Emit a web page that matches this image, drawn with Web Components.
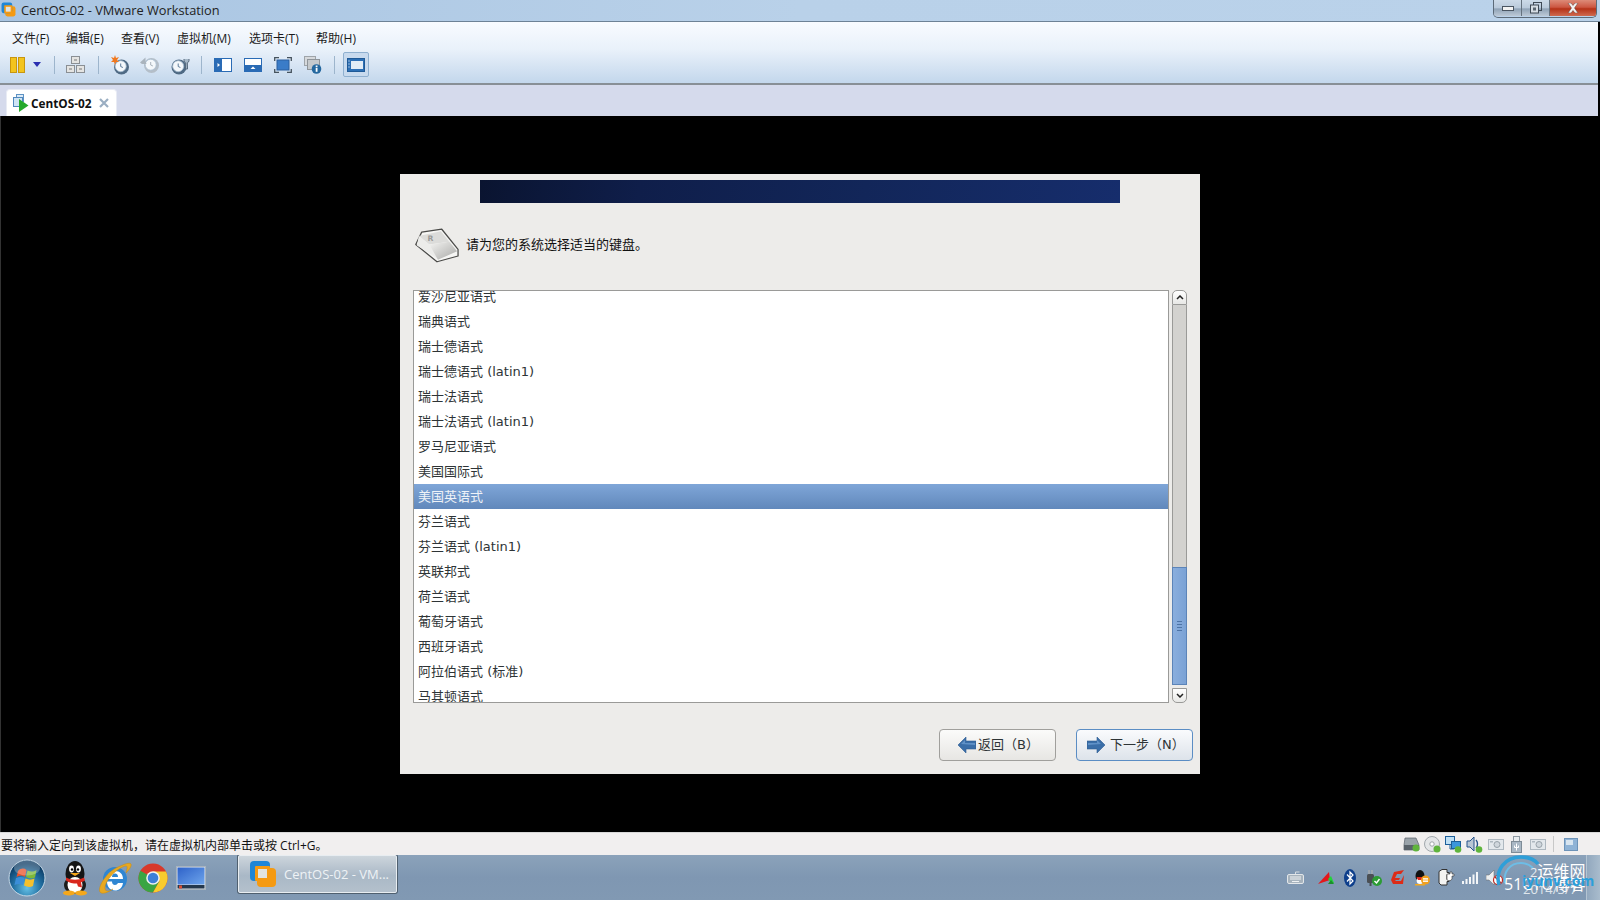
<!DOCTYPE html>
<html lang="zh"><head><meta charset="utf-8"><title>CentOS-02 - VMware Workstation</title>
<style>
html,body{margin:0;padding:0;width:1600px;height:900px;overflow:hidden;background:#000}
body{font-family:"Open Sans","Noto Sans CJK SC",sans-serif}
</style></head><body>
<vm-app></vm-app>
<script>
const CJK='"Noto Sans CJK SC"';
function def(name,css,html,init){
  customElements.define(name,class extends HTMLElement{
    constructor(){super();const r=this.attachShadow({mode:'open'});
      r.innerHTML='<style>'+css+'</style>'+(typeof html==='function'?html(this):html);}
    connectedCallback(){if(init)init(this)}
  });
}
/* ---------- icons ---------- */
const clock=(cx,cy,r,rim,hand)=>`<circle cx="${cx}" cy="${cy}" r="${r}" fill="${rim}"/><circle cx="${cx-.8}" cy="${cy-.8}" r="${r-2}" fill="#f4f8fb" stroke="#a9bfd2" stroke-width=".8"/><path d="M${cx-.8} ${cy-3.500}v3l2.200 1" fill="none" stroke="${hand}" stroke-width=".9"/>`;
const I={
 pause:'<svg width="15" height="16" viewBox="0 0 15 16"><rect x=".5" y=".5" width="6" height="15" fill="#f3c41e" stroke="#c8960e"/><rect x="8.5" y=".5" width="6" height="15" fill="#f3c41e" stroke="#c8960e"/></svg>',
 drop:'<svg width="8" height="5" viewBox="0 0 8 5"><path d="M0 0h8L4 5z" fill="#2a2fb0"/></svg>',
 net:'<svg width="19" height="17" viewBox="0 0 19 17"><g fill="#e4e4e2" stroke="#8a8f94"><rect x="5.500" y=".5" width="8" height="7"/><rect x=".5" y="9.500" width="8" height="7"/><rect x="10.500" y="9.500" width="8" height="7"/></g><path d="M8 4h3M3 13h3M13 13h3" stroke="#777"/></svg>',
 snap:`<svg width="20" height="20" viewBox="0 0 20 20">${clock(11.500,12,7.500,'#4f6a84','#4b6c8c')}<path d="M5 0l1 3 3-1-2 3 2 2-3 0-1 3-1-3-3 0 2-2-2-3 3 1z" fill="#f0781e"/></svg>`,
 rev:`<svg width="20" height="18" viewBox="0 0 20 18">${clock(11.500,9.500,7.500,'#b4bec8','#a3adb6')}<path d="M0 6.500l5.500-5v3.500l1 3H2z" fill="#aab4bd"/></svg>`,
 mgr:`<svg width="19" height="20" viewBox="0 0 19 20">${clock(8,12,7.500,'#4f6a84','#4b6c8c')}<path d="M13 4v1.500a2.500 2.500 0 0 0 1.700 2.300L14.500 14h2l-.2-6.200A2.500 2.500 0 0 0 18 5.500V4" fill="#a6b8c8" stroke="#56697c" stroke-width="1"/></svg>`,
 left:'<svg width="18" height="14" viewBox="0 0 18 14"><rect x=".5" y=".5" width="17" height="13" fill="#fff" stroke="#2a6bb5"/><rect x="1" y="1" width="7" height="12" fill="#2a6bb5"/><path d="M3.500 5l2.500 2-2.500 2z" fill="#fff"/></svg>',
 bottom:'<svg width="18" height="14" viewBox="0 0 18 14"><rect x=".5" y=".5" width="17" height="13" fill="#fff" stroke="#2a6bb5"/><rect x="1" y="7" width="16" height="6" fill="#2a6bb5"/><path d="M6.500 11L9 8.500l2.500 2.500z" fill="#fff"/></svg>',
 full:'<svg width="18" height="16" viewBox="0 0 18 16"><rect x="3" y="3" width="12" height="10" fill="#3a7cc8" stroke="#2a5e9e"/><path d="M.7 4V.7H5M13 .7h4.300V4M.7 12v3.300H5M13 15.300h4.300V12" fill="none" stroke="#46535e" stroke-width="1.300"/></svg>',
 info:'<svg width="18" height="18" viewBox="0 0 18 18"><rect x=".5" y=".5" width="11" height="9" fill="#d6d9dc" stroke="#9ea4a9"/><rect x="3.500" y="3.500" width="12" height="10" fill="#c6cacd" stroke="#8f959a"/><circle cx="12.500" cy="13" r="4.800" fill="#25689f"/><rect x="11.700" y="11.800" width="1.800" height="4" fill="#fff"/><rect x="11.700" y="9.500" width="1.800" height="1.600" fill="#fff"/></svg>',
 unity:'<svg width="18" height="14" viewBox="0 0 18 14"><rect x=".5" y=".5" width="17" height="13" fill="#2c6fb5" stroke="#1f5a97"/><rect x="4" y="3" width="12" height="8" fill="#e2edf7"/><path d="M1.500 3h1M1.500 6h1M1.500 9h1" stroke="#fff"/></svg>',
 vmTab:'<svg width="16" height="18" viewBox="0 0 16 18"><rect x="3.500" y=".5" width="7" height="7" fill="#dbeaf7" stroke="#5d92c4"/><rect x=".5" y="3.500" width="9" height="9" fill="#cfe3f5" stroke="#4f88bd"/><path d="M6 5l9.500 6.500L6 18z" fill="#24a82c"/></svg>',
 tabX:'<svg width="10" height="10" viewBox="0 0 10 10"><path d="M1 1l8 8M9 1L1 9" stroke="#9aaec2" stroke-width="2.200"/></svg>',
 min:'<svg width="12" height="5" viewBox="0 0 12 5"><rect x=".5" y=".5" width="11" height="4" fill="#f2f2f2" stroke="#4a5561"/></svg>',
 max:'<svg width="12" height="12" viewBox="0 0 12 12"><rect x="3.500" y=".5" width="8" height="8" fill="none" stroke="#3e4955"/><rect x=".5" y="3" width="8" height="8" fill="#d6dde4" stroke="#3e4955"/><rect x="3" y="5.500" width="3" height="3" fill="#59646f"/></svg>',
 close:'<svg width="12" height="10" viewBox="0 0 12 10"><path d="M1 0h3l2 2.500L8 0h3L7.500 5 11 10H8L6 7.500 4 10H1l3.500-5z" fill="#f3f3f3" stroke="#5f3a35" stroke-width=".5"/></svg>',
 vmApp:(s)=>`<svg width="${s}" height="${s}" viewBox="0 0 28 28"><rect x="8" y="8" width="19" height="19" rx="4" fill="#f59a12"/><rect x="1" y="1" width="20" height="20" rx="4" fill="#1f86d6"/><rect x="6" y="6" width="15" height="15" rx="1" fill="#f59a12"/><rect x="9" y="9" width="9" height="9" fill="#e2e4e0"/></svg>`,
 key:'<svg width="44" height="35" viewBox="0 0 46 36"><defs><linearGradient id="kf" x1="0" y1="0" x2="1" y2="1"><stop offset="0" stop-color="#f4f4f2"/><stop offset="1" stop-color="#a8a8a6"/></linearGradient></defs><path d="M.8 17L7 4 28 1l17 21v7L23 35z" fill="#f6f6f4" stroke="#4a4a48" stroke-width="1.300" stroke-linejoin="round"/><path d="M4 8L27 3l9 11-21 3z" fill="#dcdcda"/><path d="M4 8l11 9 9 15L2 18z" fill="#ececea"/><path d="M15 17l21-3 8 10-20 9z" fill="url(#kf)"/><text x="13" y="13" font-size="8" font-weight="700" font-family="DejaVu Sans" fill="#9a9a98">R</text></svg>',
 arrowL:'<svg width="18" height="18" viewBox="0 0 18 18"><path d="M0 9l8-8v4h10v8H8v4z" fill="#3a6ea8" stroke="#2c5a92" stroke-width=".6"/><path d="M3 8l4-4v3h10v2z" fill="#6fa0d4" opacity=".7"/></svg>',
 arrowR:'<svg width="18" height="18" viewBox="0 0 18 18"><path d="M18 9l-8-8v4H0v8h10v4z" fill="#3a6ea8" stroke="#2c5a92" stroke-width=".6"/><path d="M1 7h9V4l4 4-13 1z" fill="#6fa0d4" opacity=".7"/></svg>',
 orb:'<svg width="38" height="38" viewBox="0 0 38 38"><defs><radialGradient id="o" cx="50%" cy="78%" r="68%"><stop offset="0" stop-color="#64c0e6"/><stop offset=".6" stop-color="#1f6c9e"/><stop offset="1" stop-color="#0c3b64"/></radialGradient></defs><circle cx="19" cy="19" r="18" fill="url(#o)" stroke="#c6d8e6" stroke-width="1"/><path d="M10 12C13 9 16 9 18.500 11L17 18C14.500 16 11.500 16 8.500 18z" fill="#e8522a"/><path d="M19.500 11.500C22.500 13 25.500 13 28.500 11L27 18.500C24 20 21 19.500 18 18z" fill="#7cb93a"/><path d="M8 19c3-1.500 6-1.500 8.500 0L15 26c-2.500-1.500-5-1.500-8.500 0z" fill="#3b8ed8"/><path d="M17.500 19.500c3 1.500 6 1.500 9 0L25 27c-3 1.500-6 1-9-.5z" fill="#f5c02c"/><ellipse cx="19" cy="9" rx="13" ry="7.500" fill="#fff" opacity=".25"/></svg>',
 qq:'<svg width="32" height="36" viewBox="0 0 32 36"><ellipse cx="16" cy="14" rx="9.500" ry="13" fill="#151515"/><ellipse cx="16" cy="25" rx="11" ry="9" fill="#1c1c1c"/><ellipse cx="16" cy="25" rx="7.500" ry="8" fill="#fff"/><ellipse cx="12.500" cy="9" rx="2.400" ry="3.400" fill="#fff"/><ellipse cx="19.500" cy="9" rx="2.400" ry="3.400" fill="#fff"/><circle cx="13" cy="9.500" r="1.200"/><circle cx="19" cy="9.500" r="1.200"/><path d="M11 13h10l-5 3z" fill="#f5a81c"/><path d="M7 17.500c6 3 12 3 18 0l1 3c-2 1-3 1.500-4 2l1 5-4-1-1-3c-4 0-8-.5-11-3z" fill="#d9281e"/><ellipse cx="10" cy="33" rx="6" ry="2.400" fill="#f5a81c"/><ellipse cx="22" cy="33" rx="6" ry="2.400" fill="#f5a81c"/></svg>',
 ie:'<svg width="34" height="34" viewBox="0 0 34 34"><circle cx="17" cy="18" r="12" fill="#2f86d2"/><path d="M9 18h16c0-5-3-8-8-8s-8 3-8 8zm5-2c0-2 1-3.500 3-3.500s3 1.500 3 3.500zM25 22h-5c-.7 1.300-1.700 2-3 2-2 0-3-1.500-3-3.500H9c0 5 3 9 8 9 4 0 7-2 8-7.500z" fill="#fff"/><path d="M2 31C-1 27 8 12 18 7c8-4 14-6 15-4 1 2-2 6-5 9 1-4 2-7 0-7-2.500 0-10 4-15 10C7 22 5 29 9 30c1.500.4 4-.5 6-2-4 3-11 6-13 3z" fill="#e8a820" stroke="#c88a10" stroke-width=".5"/></svg>',
 chrome:'<svg width="30" height="30" viewBox="0 0 30 30"><circle cx="15" cy="15" r="14.500" fill="#d8392b"/><path d="M15 15L2.500 7.700A14.500 14.500 0 0 0 15 29.500L21.500 18z" fill="#3aa544"/><path d="M15 8.500h13A14.500 14.500 0 0 1 15 29.500L21.500 18z" fill="#f8cc2e"/><circle cx="15" cy="15" r="6.800" fill="#f2f2f2"/><circle cx="15" cy="15" r="5.300" fill="#3d80d8"/></svg>',
 desk:'<svg width="30" height="24" viewBox="0 0 30 24"><rect x=".5" y=".5" width="29" height="23" fill="#dfe5ea" stroke="#a9b4bd"/><defs><linearGradient id="d" x1="0" y1="0" x2="1" y2="1"><stop offset="0" stop-color="#2e62c9"/><stop offset="1" stop-color="#6ea5ec"/></linearGradient></defs><rect x="1.500" y="1.500" width="27" height="17" fill="url(#d)"/><rect x="1.500" y="19" width="27" height="3.500" fill="#24384d"/><rect x="3" y="19.500" width="3" height="3" fill="#d94d34"/></svg>',
 tKeyb:'<svg width="17" height="13" viewBox="0 0 17 13"><rect x=".5" y="3.500" width="16" height="9" rx="1.500" fill="#a7b3bd" stroke="#e2e6e9"/><path d="M3 6h11M3 8h11M5 10.500h7" stroke="#eef1f3"/><path d="M8.500 3V1h4" fill="none" stroke="#d8dee2"/></svg>',
 tArrow:'<svg width="16" height="14" viewBox="0 0 16 14"><path d="M0 13L11 1l1 8z" fill="#e3181c"/><path d="M10 8l3-3 3 7h-3z" fill="#23d43a"/><path d="M10 13l3-4 3 4z" fill="#1b8f2c"/></svg>',
 tBt:'<svg width="12" height="18" viewBox="0 0 12 18"><ellipse cx="6" cy="9" rx="6" ry="9" fill="#0e3f8c"/><path d="M3 5.500l6 6.500-3 3V3l3 3-6 6.500" fill="none" stroke="#fff" stroke-width="1.200"/></svg>',
 tPow:'<svg width="16" height="16" viewBox="0 0 16 16"><rect x="1" y="4" width="7" height="9" rx="1.500" fill="#4a4f54"/><path d="M3 0v4M6 0v4" stroke="#a8adb2" stroke-width="1.400"/><path d="M4.500 13v3" stroke="#4a4f54" stroke-width="2"/><circle cx="11" cy="11" r="5" fill="#2c9c34"/><path d="M8.500 11l2 2 3-4" fill="none" stroke="#fff" stroke-width="1.400"/></svg>',
 tG:'<svg width="14" height="15" viewBox="0 0 14 15"><path d="M13 0L10 4H6L4 8h5l-1 2H5l-1 1h6l3-6-1 9H2L0 10 3 2z" fill="#dd2b16"/></svg>',
 tQQ:'<svg width="16" height="17" viewBox="0 0 16 17"><ellipse cx="6" cy="7" rx="4.500" ry="6" fill="#111"/><ellipse cx="6" cy="11.500" rx="3.400" ry="3.600" fill="#fff"/><path d="M2.500 8h7l-1 3H4z" fill="#d9281e"/><path d="M1 15h10v1.500H1z" fill="#f5a81c"/><circle cx="11.500" cy="11" r="4.500" fill="#f0a01e"/><path d="M9 9.700h5M9 11h5M9 12.400h5" stroke="#fff"/></svg>',
 tPlug:'<svg width="17" height="17" viewBox="0 0 17 17"><path d="M1 2.500L4 .5h5v3h2v2h-2v5h2v2H9v3.500H3L1 14z" fill="#f4f4f2" stroke="#333" stroke-width="1"/><path d="M9 5l3 0v-2h2v2h2v2h-2v3c-1 2-3 2-5 1z" fill="#fff" stroke="#333" stroke-width=".6"/></svg>',
 tSig:'<svg width="16" height="12" viewBox="0 0 16 12"><g fill="#f4f6f8"><rect x="0" y="9" width="2" height="3"/><rect x="3.500" y="7" width="2" height="5"/><rect x="7" y="5" width="2" height="7"/><rect x="10.500" y="2.500" width="2" height="9.500"/><rect x="14" y="0" width="2" height="12"/></g></svg>',
 tSpk:'<svg width="17" height="15" viewBox="0 0 17 15"><path d="M0 5h3l5-5v15l-5-5H0z" fill="#eceef0" stroke="#666" stroke-width=".5"/><circle cx="12" cy="10" r="4.500" fill="#fff" stroke="#c4261c" stroke-width="1.200"/><path d="M9 7l6 6" stroke="#c4261c" stroke-width="1.200"/></svg>',
 sDisk:'<svg width="17" height="15" viewBox="0 0 17 15"><path d="M2 1h11l3 7v5H1V8z" fill="#9aa3aa" stroke="#59626a" stroke-width=".7"/><rect x="1" y="8" width="15" height="5" fill="#59626a"/><circle cx="13" cy="11" r="3.500" fill="#5fb43c"/></svg>',
 sCd:'<svg width="17" height="17" viewBox="0 0 17 17"><circle cx="8" cy="8" r="7.500" fill="#e4e6e8" stroke="#a2a8ad"/><circle cx="8" cy="8" r="2.200" fill="#fff" stroke="#9ea3a7"/><circle cx="13" cy="13" r="3.500" fill="#5fb43c"/></svg>',
 sNet:'<svg width="17" height="17" viewBox="0 0 17 17"><rect x=".5" y=".5" width="9" height="8" fill="#bfe0f5" stroke="#1c5f9a"/><rect x="6.500" y="5.500" width="9" height="7" fill="#3a96dc" stroke="#1c5f9a"/><path d="M5 9v4h4" fill="none" stroke="#1c5f9a"/><circle cx="13" cy="13.500" r="3.300" fill="#5fb43c"/></svg>',
 sSnd:'<svg width="17" height="17" viewBox="0 0 17 17"><path d="M1 5h3l4-4v14l-4-4H1z" fill="#b8c6d4" stroke="#24528a"/><path d="M10 4c2 2 2 6 0 8" fill="none" stroke="#24528a" stroke-width="1.400"/><circle cx="13" cy="13.500" r="3.300" fill="#5fb43c"/></svg>',
 sCam:'<svg width="16" height="11" viewBox="0 0 16 11"><rect x=".5" y=".5" width="15" height="10" fill="#e3e8ec" stroke="#aeb8c0"/><circle cx="9" cy="5.500" r="3" fill="#cfd6dc" stroke="#98a2aa"/><rect x="2" y="2" width="3" height="1.500" fill="#aeb8c0"/></svg>',
 sUsb:'<svg width="11" height="17" viewBox="0 0 11 17"><rect x="2.500" y=".5" width="6" height="5" fill="#e8ecef" stroke="#8e99a2"/><rect x=".5" y="5.500" width="10" height="11" fill="#a9b7c4" stroke="#7f8c97"/><path d="M5.500 7.500v7M3.500 9.500v2h4v-2" fill="none" stroke="#fff"/></svg>',
 sMsg:'<svg width="14" height="13" viewBox="0 0 14 13"><rect x=".5" y=".5" width="13" height="12" fill="#8fb3d6" stroke="#6d93b8"/><rect x="2" y="2" width="7" height="5" fill="#d8e5f0"/></svg>'
};

/* ---------- window chrome ---------- */
def('title-bar',`:host{display:flex;align-items:flex-start;height:21px;background:linear-gradient(90deg,#a9c5e2,#b9d1e9 50%,#bad2ea);border-bottom:1px solid #6d8296;position:relative}
.ico{display:flex;padding:2px 0 0 1px}
.t{font:12.800px/20px "Open Sans",sans-serif;color:#222;padding-left:5px}
.f{flex:1}
.ctl{display:flex;height:17px;margin-right:3px;border:1px solid #5c6a78;border-top:0;border-radius:0 0 5px 5px;overflow:hidden}
.b{display:flex;align-items:center;justify-content:center;height:16px;width:27px;background:linear-gradient(#ccdae8,#b9c9da 50%,#8fa2b6 55%,#bcc9d6);border-right:1px solid #65727f}
.c{width:46px;border:0;background:linear-gradient(#dd8b78,#cc5742 45%,#b53218 55%,#cf6a50)}`,
`<div class="ico">${I.vmApp(15)}</div><span class="t">CentOS-02 - VMware Workstation</span><span class="f"></span>
<div class="ctl"><div class="b">${I.min}</div><div class="b">${I.max}</div><div class="b c">${I.close}</div></div>`);

def('menu-bar',`:host{display:grid;grid-template-columns:54px 55px 56px 72px 67px auto;height:30px;box-sizing:border-box;padding:4px 0 0 12px;align-items:center;font:12px/16px "Open Sans",${CJK},sans-serif;color:#1a1a1a}
span{white-space:nowrap}`,
'<span>文件(F)</span><span>编辑(E)</span><span>查看(V)</span><span>虚拟机(M)</span><span>选项卡(T)</span><span>帮助(H)</span>');

def('tool-bar',`:host{display:flex;height:25px;align-items:center;padding-left:10px}
i{display:block;width:1px;height:18px;background:#9db5cc}
.s{display:flex;align-items:center;justify-content:center;width:20px}
.on{width:26px;height:25px;background:#c8daee;border:1px solid #8fb0d0;border-radius:2px;box-sizing:border-box;display:flex;align-items:center;justify-content:center}`,
`<div style="display:flex">${I.pause}</div><div style="display:flex;margin-left:8px">${I.drop}</div>
<i style="margin-left:13px"></i><div class="s" style="margin-left:10px">${I.net}</div>
<i style="margin-left:13px"></i><div class="s" style="margin-left:11px">${I.snap}</div><div class="s" style="margin-left:10px">${I.rev}</div><div class="s" style="margin-left:10px">${I.mgr}</div>
<i style="margin-left:11px"></i><div class="s" style="margin-left:11px">${I.left}</div><div class="s" style="margin-left:10px">${I.bottom}</div><div class="s" style="margin-left:10px">${I.full}</div><div class="s" style="margin-left:10px">${I.info}</div>
<i style="margin-left:11px"></i><div class="on" style="margin-left:8px">${I.unity}</div>`);

def('tab-strip',`:host{display:flex;height:31px;align-items:flex-end;box-sizing:border-box;padding-left:6px;background:#d5daec;margin-right:2px}
.tab{display:flex;align-items:center;box-sizing:border-box;width:111px;height:27px;background:#fff;border-radius:4px 4px 0 0;border:1px solid #e8ebf4;border-bottom:0;padding-left:6px}
b{font:700 11.800px/16px "Open Sans",sans-serif;color:#111;margin-left:2px}
.x{margin-left:auto;margin-right:7px;display:flex}
svg{display:block}`,
`<div class="tab">${I.vmTab}<b>CentOS-02</b><span class="x">${I.tabX}</span></div>`);

/* ---------- guest ---------- */
def('key-row',`:host{display:flex;height:25px;align-items:center;padding-left:4px;flex:none;font:13px/25px "DejaVu Sans",${CJK},sans-serif;color:#2e3436;white-space:nowrap}
:host([sel]){background:linear-gradient(#7fa6d8,#6188bb);color:#eef2f7}`,'<slot></slot>');

def('scroll-bar',`:host{display:flex;flex-direction:column;width:15px;height:413px;box-sizing:border-box}
.b{height:15px;flex:none;box-sizing:border-box;border:1px solid #9a9a98;background:linear-gradient(#fff,#e8e8e6);display:flex;align-items:center;justify-content:center}
.u{border-radius:5px 5px 0 0}.d{border-radius:0 0 5px 5px;margin-top:3px}
.tr{flex:1;display:flex;flex-direction:column;background:#d3d2cf;border:solid #9a9a98;border-width:0 1px}
.sp{height:262px;flex:none}
.th{height:118px;box-sizing:border-box;background:linear-gradient(90deg,#8aaedd,#7ba2d5);border:1px solid #5c84b8;margin:0 -1px;display:flex;flex-direction:column;align-items:center;justify-content:center;gap:2px}
.th i{display:block;width:5px;height:1px;background:#4e74a6}`,
`<div class="b u"><svg width="8" height="5" viewBox="0 0 8 5"><path d="M1 4l3-3 3 3" fill="none" stroke="#222" stroke-width="1.500"/></svg></div>
<div class="tr"><div class="sp"></div><div class="th"><i></i><i></i><i></i><i></i></div></div>
<div class="b d"><svg width="8" height="5" viewBox="0 0 8 5"><path d="M1 1l3 3 3-3" fill="none" stroke="#222" stroke-width="1.500"/></svg></div>`);

def('wizard-button',`:host{display:flex;align-items:center;box-sizing:border-box;width:117px;height:32px;border:1px solid #a09f9c;border-radius:4px;background:linear-gradient(#fbfbfa,#e7e6e3);font:13px/16px "DejaVu Sans",${CJK},sans-serif;color:#2e3436;white-space:nowrap}
:host([focus]){border:1.500px solid #5b8dc4;background:linear-gradient(#fafbfd,#dde3ea)}
.i{display:flex;flex:none}`,
e=>`<span class="i" style="margin:0 ${e.hasAttribute('focus')?'5px 0 10px':'2px 0 18px'}">${e.hasAttribute('focus')?I.arrowR:I.arrowL}</span><slot></slot>`);

def('guest-panel',`:host{display:flex;flex-direction:column;width:800px;height:600px;background:#edecea;flex:none}
.bn{height:23px;width:640px;margin:6px auto 0;background:linear-gradient(100deg,#0a1430,#0f1e4a 25%,#122659 60%,#162d6c)}
.hd{display:flex;align-items:center;margin:25px 0 0 15px;height:35px;font:13px/16px ${CJK},sans-serif;color:#111}
.hd span{margin:0 0 3px 7px}
.lr{display:flex;margin:27px 0 0 13px;gap:3px}
.ls{width:756px;height:413px;box-sizing:border-box;background:#fff;border:1px solid #9a9a98;overflow:hidden}
.in{display:flex;flex-direction:column;margin-top:-7px}
.ft{display:flex;justify-content:flex-end;gap:20px;margin:26px 7px 0 0}`,
`<div class="bn"></div>
<div class="hd">${I.key}<span>请为您的系统选择适当的键盘。</span></div>
<div class="lr"><div class="ls"><div class="in"><slot></slot></div></div><scroll-bar></scroll-bar></div>
<div class="ft"><wizard-button>返回（B）</wizard-button><wizard-button focus>下一步（N）</wizard-button></div>`);

/* ---------- status and taskbar ---------- */
def('status-bar',`:host{display:flex;align-items:center;height:23px;background:#f1efef;font:12px/16px "Open Sans",${CJK},sans-serif;color:#111;white-space:nowrap;border-top:1px solid #d8d8d8;box-sizing:border-box}
.r{margin-left:auto;display:flex;align-items:center;margin-right:19px}
.r div{display:flex;justify-content:center;width:21px}
i{display:block;width:1px;height:16px;background:#c8c8c8;margin:0 6px 0 5px}`,
`<span style="padding:3px 0 0 1px">要将输入定向到该虚拟机，请在虚拟机内部单击或按 Ctrl+G。</span>
<div class="r"><div>${I.sDisk}</div><div>${I.sCd}</div><div>${I.sNet}</div><div>${I.sSnd}</div><div>${I.sCam}</div><div>${I.sUsb}</div><div>${I.sCam}</div><i></i><div>${I.sMsg}</div></div>`);

def('task-bar',`:host{display:flex;align-items:center;height:45px;background:linear-gradient(#8ba2ba,#7f97b2 50%,#8199b3);position:relative;overflow:hidden}
.a{display:flex;align-items:center;justify-content:center;flex:none}
.tb{display:flex;align-items:center;box-sizing:border-box;width:159px;height:38px;align-self:flex-start;margin-left:32px;background:linear-gradient(#cdd5dc,#a9b8c6 55%,#b4c0cc);border:1px solid #e8edf1;border-radius:2px;box-shadow:0 0 0 1px #50606f;padding-left:10px;color:#eef2f5;font:13px/16px "Open Sans",sans-serif;white-space:nowrap}
.tb span{margin-left:7px}
.tr{display:flex;align-items:center;margin-left:auto;margin-right:94px}
.tr div{display:flex;justify-content:center;width:24px}
.sh{position:absolute;right:0;top:0;width:13px;height:45px;background:linear-gradient(90deg,#92a8be,#a9bccd);border-left:1px solid #b4c4d2}
.wm{position:absolute;right:0;top:0;width:120px;height:45px;color:#fff;pointer-events:none}
.wm svg{position:absolute;left:0;top:0}
.wm span{position:absolute;white-space:nowrap}`,
`<div class="a" style="width:38px;margin-left:8px">${I.orb}</div>
<div class="a" style="width:32px;margin-left:13px">${I.qq}</div>
<div class="a" style="width:34px;margin-left:7px">${I.ie}</div>
<div class="a" style="width:30px;margin-left:6px">${I.chrome}</div>
<div class="a" style="width:30px;margin-left:8px">${I.desk}</div>
<div class="tb">${I.vmApp(28)}<span>CentOS-02 - VM...</span></div>
<div class="tr"><div>${I.tKeyb}</div><div style="margin-left:7px">${I.tArrow}</div><div>${I.tBt}</div><div>${I.tPow}</div><div>${I.tG}</div><div>${I.tQQ}</div><div>${I.tPlug}</div><div>${I.tSig}</div><div>${I.tSpk}</div></div>
<div class="sh"></div>
<div class="wm"><svg width="70" height="45" viewBox="0 0 70 45"><path d="M19 30C15 15 25 2 41 2c7 0 13 2 17 7" fill="none" stroke="#2f9fd8" stroke-width="3.500"/><path d="M25 28C23 17 30 8 41 8c5 0 9 2 12 5" fill="none" stroke="#6dbde6" stroke-width="2"/></svg>
<span style="left:50px;top:3px;font:16px/18px ${CJK},sans-serif;color:#5d7590"><span style="position:static;color:#e6ecf2;font-size:13px">2</span>运维网</span>
<span style="left:43px;top:27px;font:13px/15px 'Open Sans',sans-serif;color:#dfe6ec">2014/3/7</span>
<span style="left:24px;top:16px;font:17px/20px 'Open Sans',${CJK},sans-serif;color:#fff;letter-spacing:.6px">51CTO博客</span>
<span style="left:42px;top:17px;font:700 14px/18px 'Open Sans',sans-serif;color:#2a9fdc">iyunv.com</span></div>`);

def('vm-app',`:host{display:flex;flex-direction:column;width:1600px;height:900px;background:#000}
.top{background:linear-gradient(#f8fbff,#e9f1fa 45%,#c3d7ec);display:flex;flex-direction:column;height:61px;margin:0 2px 0 0;border-bottom:2px solid #888f96;box-sizing:content-box}
.vm{flex:1;display:flex;align-items:center;justify-content:center;min-height:0;box-shadow:inset 1px 0 #333}`,
`<title-bar></title-bar>
<div class="top"><menu-bar></menu-bar><tool-bar></tool-bar></div>
<tab-strip></tab-strip>
<div class="vm"><guest-panel id="g"></guest-panel></div>
<status-bar></status-bar>
<task-bar></task-bar>`,
e=>{
  const rows=['爱沙尼亚语式','瑞典语式','瑞士德语式','瑞士德语式 (latin1)','瑞士法语式','瑞士法语式 (latin1)','罗马尼亚语式','美国国际式','美国英语式','芬兰语式','芬兰语式 (latin1)','英联邦式','荷兰语式','葡萄牙语式','西班牙语式','阿拉伯语式 (标准)','马其顿语式'];
  const g=e.shadowRoot.getElementById('g');
  rows.forEach((t,i)=>{const r=document.createElement('key-row');r.textContent=t;if(i===8)r.setAttribute('sel','');g.appendChild(r);});
});
</script></body></html>
